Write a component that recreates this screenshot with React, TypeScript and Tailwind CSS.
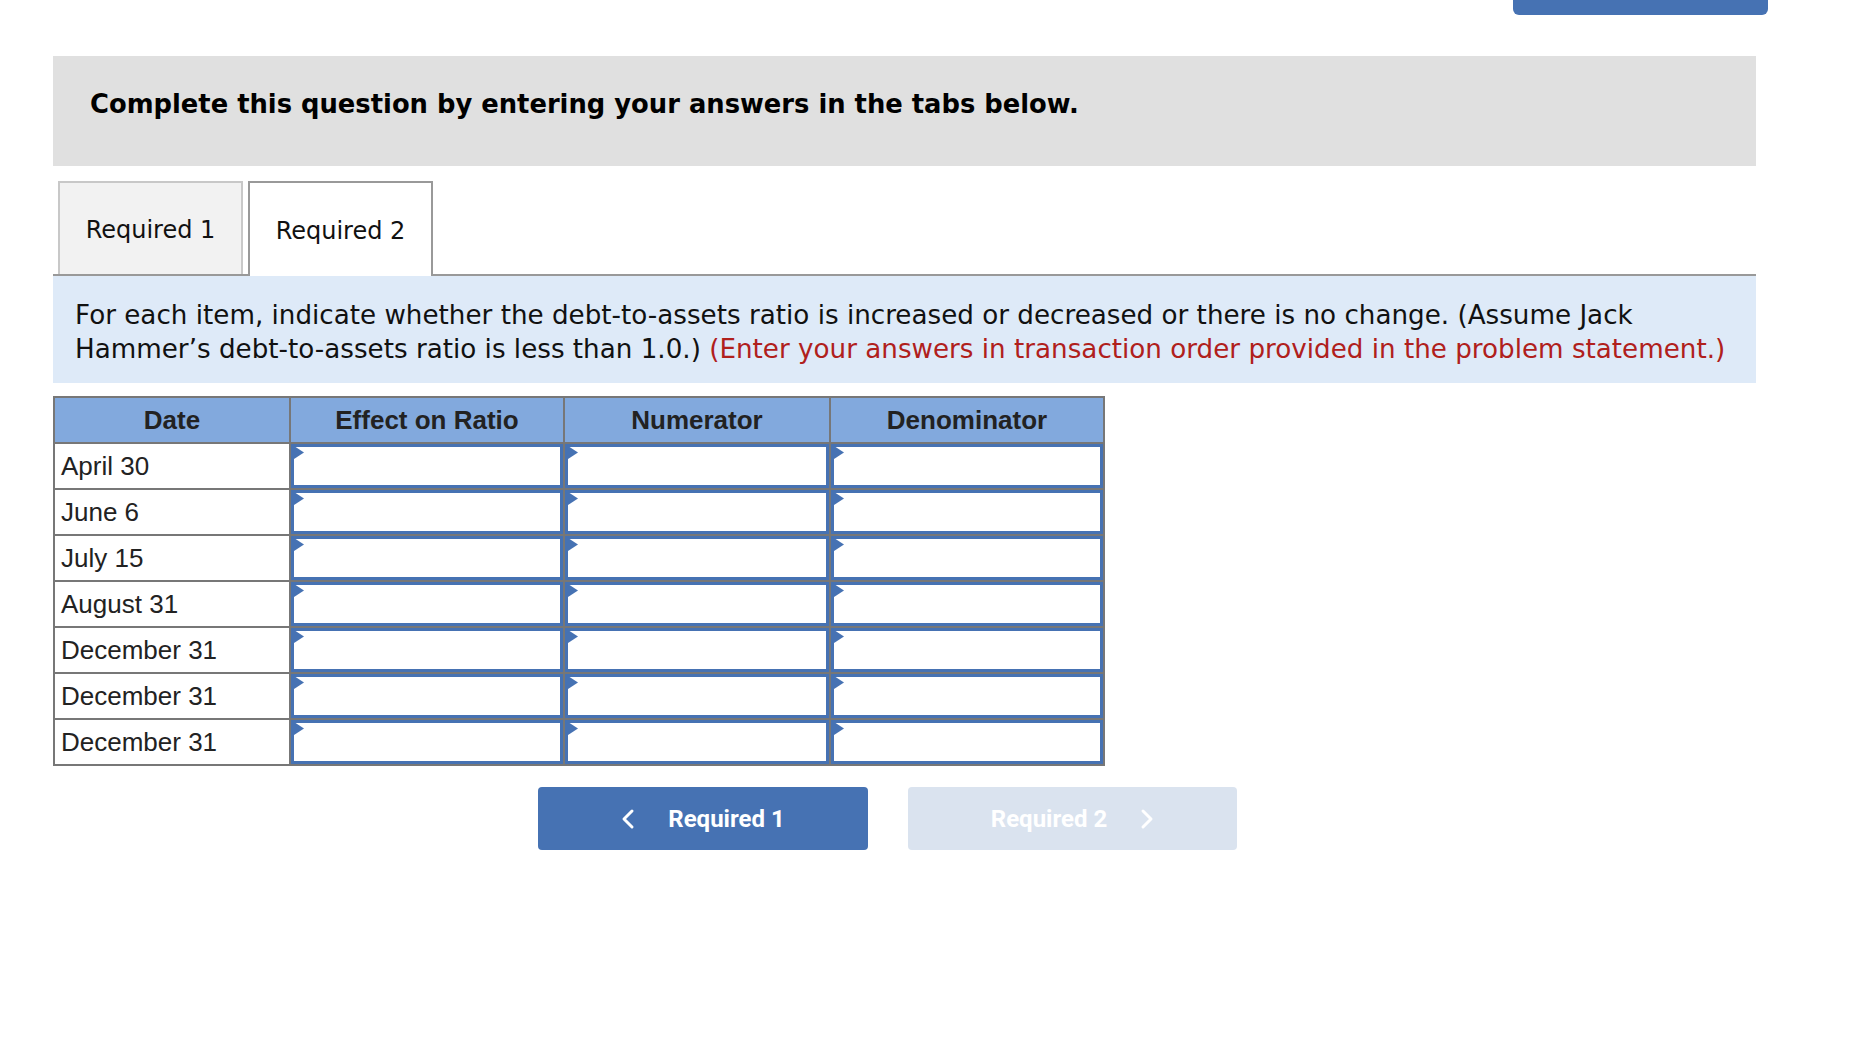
const FILAS = [
  'April 30',
  'June 6',
  'July 15',
  'August 31',
  'December 31',
  'December 31',
  'December 31',
]

const COLUMNAS = ['Effect on Ratio', 'Numerator', 'Denominator']

// Celda de respuesta con el triangulito azul del desplegable
function CeldaInput() {
  return (
    <td className="p-0 border-2 border-[#777] h-[46px]">
      <div className="relative h-full border-[3px] border-[#4672b3] bg-white">
        <svg className="absolute left-0 -top-[1px]" width="10" height="13" viewBox="0 0 10 13">
          <polygon points="0,0 10,6.5 0,13" fill="#4672b3" />
        </svg>
      </div>
    </td>
  )
}

function Chevron({ dir }: { dir: 'left' | 'right' }) {
  return (
    <svg width="14" height="22" viewBox="0 0 14 22" fill="none" stroke="currentColor" strokeWidth="3" strokeLinecap="round" strokeLinejoin="round">
      {dir === 'left' ? <polyline points="11,3 3,11 11,19" /> : <polyline points="3,3 11,11 3,19" />}
    </svg>
  )
}

export default function App() {
  return (
    <div className="min-h-screen bg-white font-['DejaVu_Sans',Verdana,sans-serif] text-[#111]">
      <div className="flex justify-end pr-[94px]">
        <div className="w-[255px] h-[15px] rounded-b-[6px] bg-[#4672b3]" />
      </div>

      <div className="ml-[53px] w-[1703px]">
        <div className="mt-[41px] h-[110px] bg-[#e0e0e0] pl-[37px] pt-[33px]">
          <p className="text-[25.8px] font-bold leading-[30px] text-black">
            Complete this question by entering your answers in the tabs below.
          </p>
        </div>

        <div className="mt-[15px] flex gap-[5px] pl-[5px] border-b-2 border-[#999]">
          <button className="w-[185px] h-[93px] bg-[#f2f2f2] border-2 border-b-0 border-[#c8c8c8] text-[24px] text-[#111] pt-[2px]">
            Required 1
          </button>
          <button className="w-[185px] h-[95px] -mb-[2px] bg-white border-2 border-b-0 border-[#999] text-[24px] text-[#111] pt-[2px]">
            Required 2
          </button>
        </div>

        <div className="bg-[#deeaf8] pl-[22px] pr-4 pt-[22px] pb-[17px] text-[26.2px] leading-[34px]">
          For each item, indicate whether the debt-to-assets ratio is increased or decreased or there is no change. (Assume Jack
          Hammer’s debt-to-assets ratio is less than 1.0.){' '}
          <span className="text-[#b0201c]">(Enter your answers in transaction order provided in the problem statement.)</span>
        </div>

        <table className="mt-[13px] border-collapse border-2 border-[#777] font-['Liberation_Sans',Arial,sans-serif] text-[26px] text-[#222]">
          <colgroup>
            <col className="w-[236px]" />
            <col className="w-[274px]" />
            <col className="w-[266px]" />
            <col className="w-[274px]" />
          </colgroup>
          <thead>
            <tr className="h-[46px] bg-[#82a9dd]">
              <th className="border-2 border-[#777] font-bold">Date</th>
              {COLUMNAS.map((c) => (
                <th key={c} className="border-2 border-[#777] font-bold">{c}</th>
              ))}
            </tr>
          </thead>
          <tbody>
            {FILAS.map((f, i) => (
              <tr key={i} className="h-[46px]">
                <td className="border-2 border-[#777] pl-[6px] text-left bg-white">{f}</td>
                <CeldaInput />
                <CeldaInput />
                <CeldaInput />
              </tr>
            ))}
          </tbody>
        </table>

        <div className="mt-[21px] ml-[485px] flex gap-[40px] font-['Roboto',sans-serif]">
          <button className="w-[330px] h-[63px] rounded-[4px] bg-[#4672b3] text-white flex items-center justify-center gap-[33px] text-[24px] font-bold">
            <Chevron dir="left" />
            Required 1
          </button>
          <button className="w-[329px] h-[63px] rounded-[4px] bg-[#dae3ef] text-white flex items-center justify-center gap-[33px] text-[24px] font-bold">
            Required 2
            <Chevron dir="right" />
          </button>
        </div>
      </div>
    </div>
  )
}
